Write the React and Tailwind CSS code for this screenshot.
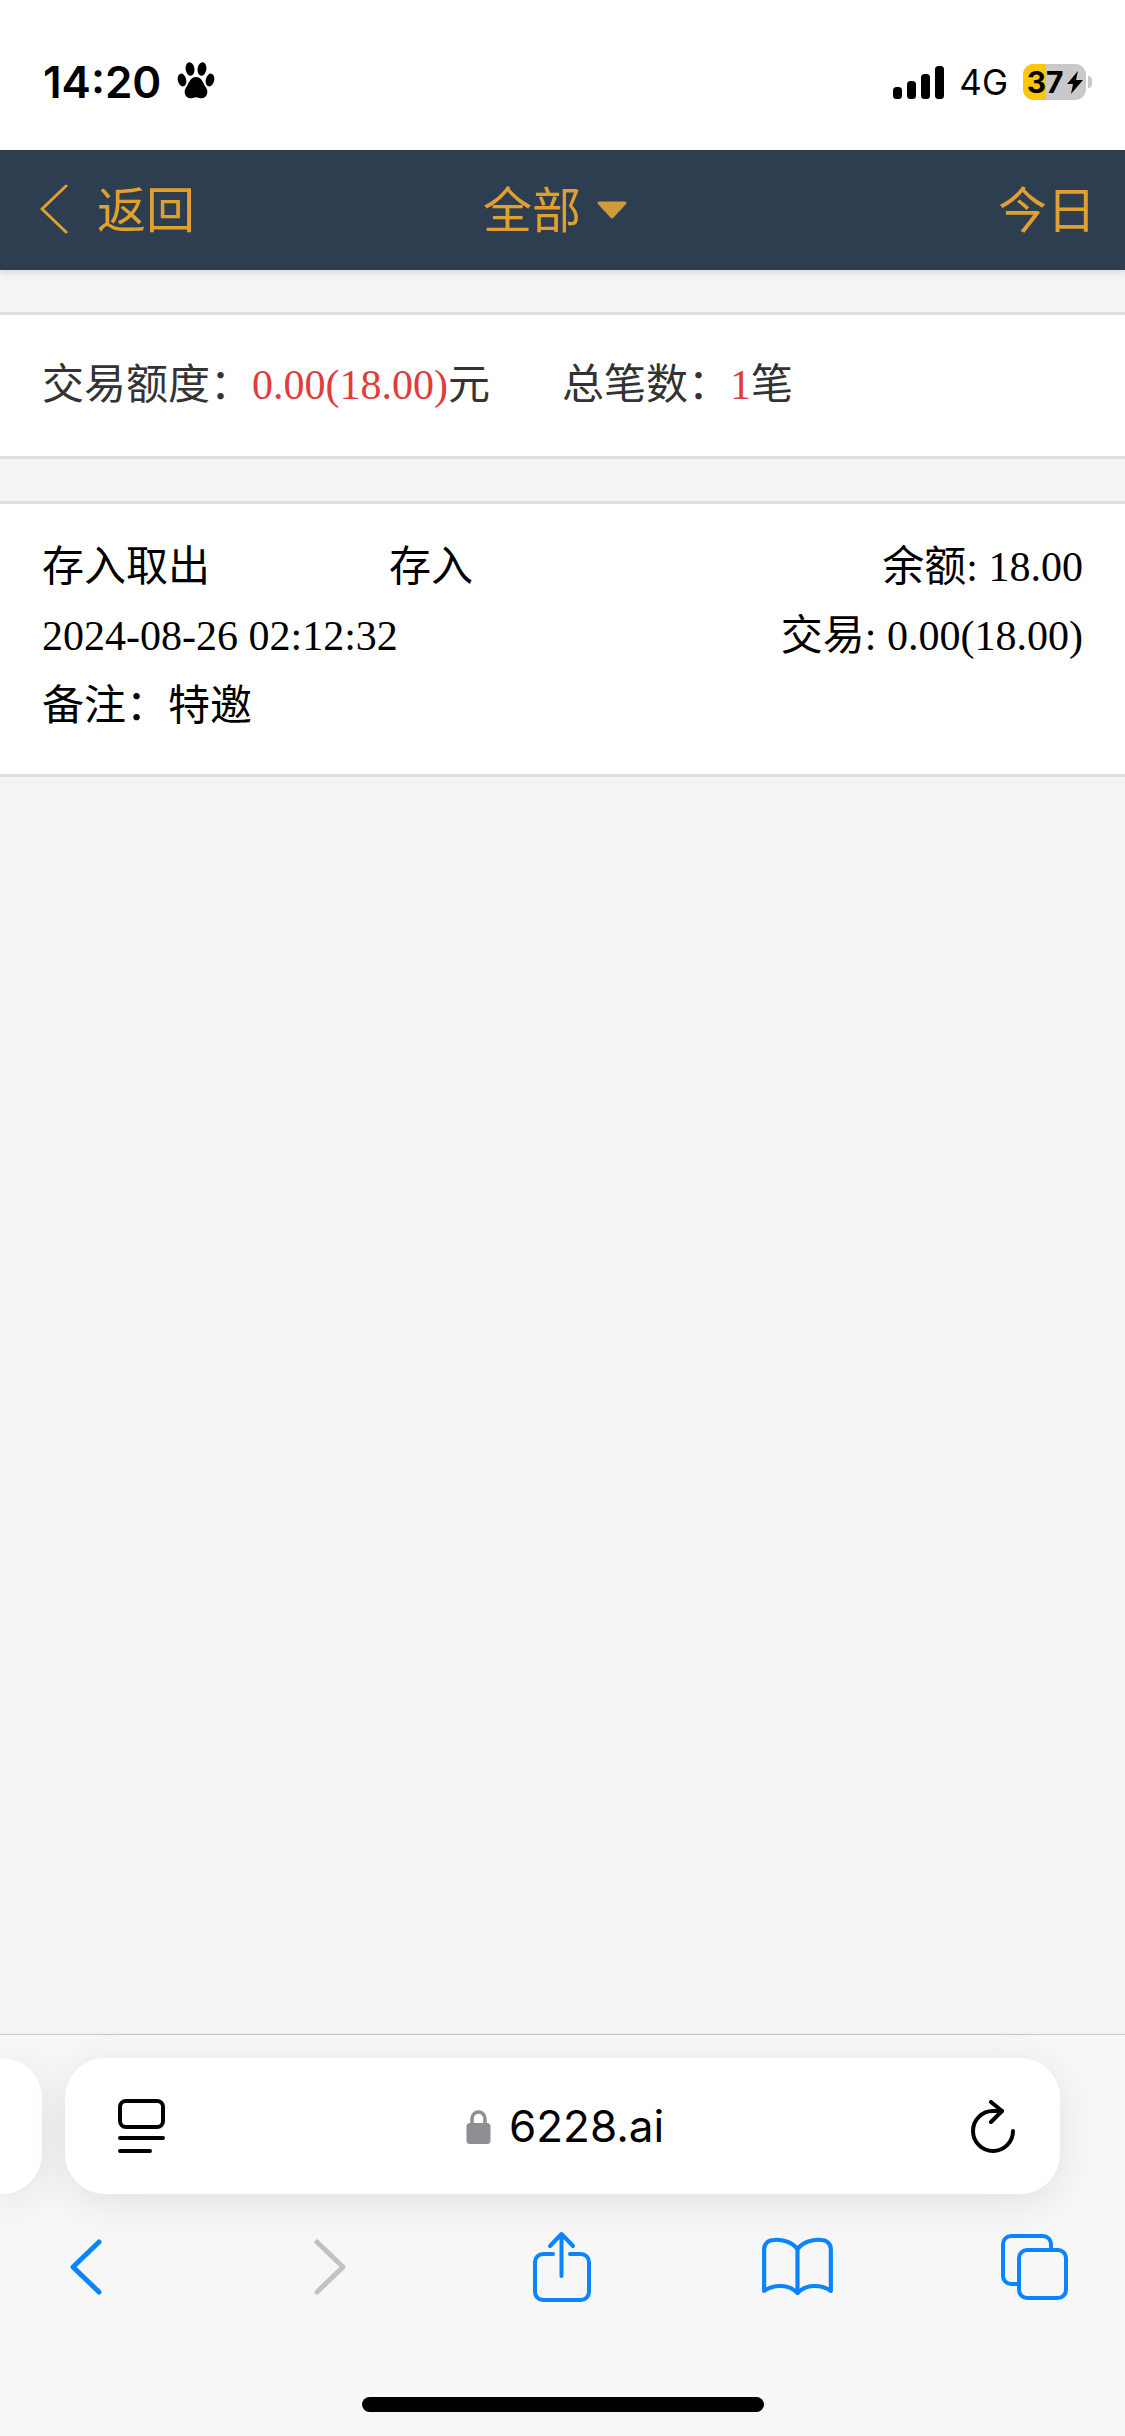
export default function App() {
  const blue = "#0a84ff";
  return (
    <div className="flex flex-col w-[1125px] h-[2436px] overflow-hidden bg-[#f3f4f6] [font-family:'Liberation_Serif','Noto_Sans_CJK_SC',serif] text-[42px] leading-[69px]">
      {/* status bar */}
      <div className="flex items-center h-[150px] bg-white pl-[43px] pr-[33px] pt-[14px] text-black">
        <span className="[font-family:Inter,sans-serif] font-semibold text-[44px] leading-[50px]">14:20</span>
        <svg className="ml-[16px] -mt-[2px]" width="38" height="38" viewBox="0 0 38 38" fill="#000">
          <ellipse cx="5" cy="18" rx="4.2" ry="6.5" transform="rotate(-12 5 18)" />
          <ellipse cx="13" cy="7" rx="4.4" ry="6.8" transform="rotate(-8 13 7)" />
          <ellipse cx="25" cy="7" rx="4.4" ry="6.8" transform="rotate(8 25 7)" />
          <ellipse cx="33" cy="18" rx="4.2" ry="6.5" transform="rotate(12 33 18)" />
          <path d="M19 15c5 0 7 5 9 9 2 3 3 5 2 8-1 4-5 5-8 4-2-1-4-1-6 0-3 1-7 0-8-4-1-3 0-5 2-8 2-4 4-9 9-9z" />
        </svg>
        <svg className="ml-auto" width="52" height="33" viewBox="0 0 52 33" fill="#000">
          <rect x="0" y="21" width="9" height="12" rx="3.5" />
          <rect x="14" y="15" width="9" height="18" rx="3.5" />
          <rect x="28" y="8" width="9" height="25" rx="3.5" />
          <rect x="42" y="0" width="9" height="33" rx="3.5" />
        </svg>
        <span className="ml-[14px] [font-family:Inter,sans-serif] text-[35px] leading-[40px]">4G</span>
        <div className="ml-[15px] flex items-center">
          <div className="flex w-[63px] h-[36px] rounded-[11px] overflow-hidden bg-[#c9c9c9] [font-family:Inter,sans-serif] font-bold text-[30px] leading-[36px]">
            <div className="w-[23px] bg-[#fdc601] text-right">3</div>
            <div className="w-[21px] text-left">7</div>
            <svg className="mt-[7px]" width="16" height="23" viewBox="0 0 16 23" fill="#000">
              <path d="M11 0 L0 13 H6 L4 23 L16 9 H9 Z" />
            </svg>
          </div>
          <div className="ml-[2px] w-[4px] h-[12px] rounded-r-full bg-[#c9c9c9]" />
        </div>
      </div>

      {/* nav bar */}
      <div className="flex items-center h-[120px] pb-[6px] bg-[#2e3e51] text-[#e0a030] text-[49px] leading-[60px] [font-family:'Noto_Sans_CJK_SC',sans-serif] font-normal shadow-[0_3px_6px_rgba(0,0,0,0.1)] pl-[40px] pr-[29px]">
        <div className="flex items-center w-[443px]">
          <svg className="mt-[4px]" width="28" height="50" viewBox="0 0 28 50" fill="none" stroke="#e0a030" strokeWidth="3" strokeLinecap="round" strokeLinejoin="round">
            <path d="M26 2 L2 25 L26 48" />
          </svg>
          <span className="ml-[29px]">返回</span>
        </div>
        <span>全部</span>
        <svg className="ml-[16px] mt-[6px]" width="30" height="18" viewBox="0 0 30 18" fill="#cf9a3a" stroke="#cf9a3a" strokeWidth="3" strokeLinejoin="round">
          <path d="M2 2 H28 L15 16 Z" />
        </svg>
        <span className="ml-auto">今日</span>
      </div>

      {/* content */}
      <div className="flex-1">
        <div className="mt-[42px] flex bg-white border-y-[3px] border-[#dfdfdf] px-[42px] py-[36px] text-[#333]">
          <div className="w-[520px]">
            交易额度：<span className="text-[#e03c3c]">0.00(18.00)</span>元
          </div>
          <div>
            总笔数：<span className="text-[#e03c3c]">1</span>笔
          </div>
        </div>
        <div className="mt-[42px] bg-white border-y-[3px] border-[#dfdfdf] px-[42px] pt-[29px] pb-[33px] text-black">
          <div className="grid grid-cols-3">
            <div>存入取出</div>
            <div>存入</div>
            <div className="text-right">余额: 18.00</div>
          </div>
          <div className="flex justify-between">
            <div>2024-08-26 02:12:32</div>
            <div>交易: 0.00(18.00)</div>
          </div>
          <div className="mt-[1px]">备注：特邀</div>
        </div>
      </div>

      {/* safari toolbar */}
      <div className="h-[402px] bg-[#f7f7f8] border-t border-[#c6c6c8]">
        <div className="flex mt-[23px] h-[136px]">
          <div className="w-[42px] bg-white rounded-r-[40px] shadow-[0_8px_40px_rgba(0,0,0,0.09)]" />
          <div className="ml-[23px] w-[995px] bg-white rounded-[40px] shadow-[0_8px_40px_rgba(0,0,0,0.09)] flex items-center pl-[53px] pr-[44px] text-black">
            <svg width="47" height="54" viewBox="0 0 47 54" fill="none" stroke="#000" strokeWidth="4" strokeLinecap="round">
              <rect x="2" y="2" width="43" height="26" rx="6" />
              <path d="M2 39 H45 M2 52 H32" />
            </svg>
            <div className="flex items-center ml-[301px]">
              <svg width="25" height="35" viewBox="0 0 25 35" fill="none">
                <path d="M6 16 V9.5 a6.5 6.5 0 0 1 13 0 V16" stroke="#8e8e93" strokeWidth="3.5" />
                <rect x="0.5" y="14" width="24" height="21" rx="3.5" fill="#8e8e93" />
              </svg>
              <span className="ml-[18px] [font-family:Inter,sans-serif] text-[44px] leading-[50px]">6228.ai</span>
            </div>
            <svg className="ml-auto" width="46" height="53" viewBox="0 0 46 53" fill="none" stroke="#000" strokeWidth="4" strokeLinecap="round" strokeLinejoin="round">
              <path d="M32 11 H23 A20 20 0 1 0 43 31" />
              <path d="M21 2 L32 11 L21 22" />
            </svg>
          </div>
        </div>
        <div className="flex items-center mt-[37px] h-[71px] pl-[70px]">
          <svg width="32" height="56" viewBox="0 0 32 56" fill="none" stroke={blue} strokeWidth="5" strokeLinecap="round" strokeLinejoin="round">
            <path d="M29 3 L3 28 L29 53" />
          </svg>
          <svg className="ml-[212px]" width="32" height="56" viewBox="0 0 32 56" fill="none" stroke="#c2c2c2" strokeWidth="5" strokeLinecap="round" strokeLinejoin="round">
            <path d="M3 3 L29 28 L3 53" />
          </svg>
          <svg className="ml-[186px]" width="59" height="71" viewBox="0 0 59 71" fill="none" stroke={blue} strokeWidth="4" strokeLinecap="round" strokeLinejoin="round">
            <path d="M21 23 H11 a8 8 0 0 0 -8 8 V61 a8 8 0 0 0 8 8 H49 a8 8 0 0 0 8 -8 V31 a8 8 0 0 0 -8 -8 H38" />
            <path d="M29.5 45 V4 M18 15 L29.5 3 L41 15" />
          </svg>
          <svg className="ml-[170px]" width="74" height="59" viewBox="0 0 71 59" preserveAspectRatio="none" fill="none" stroke={blue} strokeWidth="4" strokeLinecap="round" strokeLinejoin="round">
            <path d="M35 12 C30 5 20 2 12 3 C7 3 3 7 3 12 V54 C12 47 27 47 35 56 C43 47 58 47 67 54 V12 C67 7 63 3 58 3 C50 2 40 5 35 12 Z" />
            <path d="M35 12 V56" />
          </svg>
          <svg className="ml-[166px]" width="67" height="66" viewBox="0 0 67 66" fill="none" stroke={blue} strokeWidth="4" strokeLinecap="round" strokeLinejoin="round">
            <path d="M16 50 H10 a8 8 0 0 1 -8 -8 V10 a8 8 0 0 1 8 -8 H42 a8 8 0 0 1 8 8 V14" />
            <rect x="18" y="16" width="47" height="48" rx="8" />
          </svg>
        </div>
        <div className="mt-[95px] ml-[362px] w-[402px] h-[15px] rounded-full bg-black" />
      </div>
    </div>
  );
}
